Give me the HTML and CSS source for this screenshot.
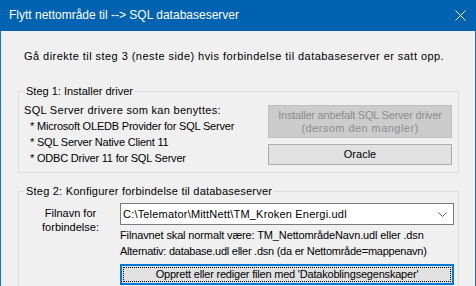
FILE: index.html
```html
<!DOCTYPE html>
<html lang="no">
<head>
  <meta charset="UTF-8">
  <title>Flytt nettområde til --&gt; SQL databaseserver</title>
  <link rel="stylesheet" href="styles.css">
</head>
<body>
  <div class="window">
    <div class="title-bar">
      <div class="title">Flytt nettområde til --&gt; SQL databaseserver</div>
      <svg class="close" width="11" height="11" viewBox="0 0 11 11">
        <path d="M0.5 0.5 L10.5 10.5 M10.5 0.5 L0.5 10.5" stroke="#fff" stroke-width="1" fill="none"/>
      </svg>
    </div>
    <div class="content">
      <div class="intro">Gå direkte til steg 3 (neste side) hvis forbindelse til databaseserver er satt opp.</div>

      <fieldset class="group group-driver">
        <legend>Steg 1: Installer driver</legend>
        <div class="driver-row">
          <div class="driver-list">
            <div class="driver-head">SQL Server drivere som kan benyttes:</div>
            <div class="bullet">* Microsoft OLEDB Provider for SQL Server</div>
            <div class="bullet">* SQL Server Native Client 11</div>
            <div class="bullet">* ODBC Driver 11 for SQL Server</div>
          </div>
          <div class="driver-buttons">
            <button class="btn btn-disabled" disabled><span class="btn-line-1">Installer anbefalt SQL Server driver</span><br><span class="btn-line-2">(dersom den mangler)</span></button>
            <button class="btn">Oracle</button>
          </div>
        </div>
      </fieldset>

      <fieldset class="group group-conn">
        <legend>Steg 2: Konfigurer forbindelse til databaseserver</legend>
        <div class="conn-row">
          <div class="conn-label">Filnavn for<br>forbindelse:</div>
          <div class="conn-field">
            <div class="combo">
              <span class="combo-text">C:\Telemator\MittNett\TM_Kroken Energi.udl</span>
              <svg class="chevron" width="9" height="5" viewBox="0 0 9 5">
                <path d="M0.5 0.5 L4.5 4.5 L8.5 0.5" stroke="#606060" stroke-width="1" fill="none"/>
              </svg>
            </div>
            <div class="hint hint-name">Filnavnet skal normalt være: TM_NettområdeNavn.udl eller .dsn</div>
            <div class="hint hint-alt">Alternativ: database.udl eller .dsn (da er Nettområde=mappenavn)</div>
            <button class="btn btn-focus"><span class="focus-rect">Opprett eller rediger filen med 'Datakoblingsegenskaper'</span></button>
          </div>
        </div>
      </fieldset>
    </div>
  </div>
</body>
</html>
```

FILE: styles.css
```css
html, body { margin: 0; padding: 0; background: #f0f0f0; overflow: hidden; }
body { font-family: 'Liberation Sans', Arial, sans-serif; font-size: 11px; color: #000; }
.window { width: 476px; height: 286px; box-sizing: border-box; border-left: 1px solid #1a6fbf; border-right: 1px solid #1a6fbf; background: #f0f0f0; }
.title-bar {
  height: 31px;
  margin: 0 -1px;
  background: #0063b1;
  display: flex;
  align-items: center;
  justify-content: space-between;
  padding: 0 10px 0 9px;
}
.title { color: #fff; font-size: 12px; padding-bottom: 1px; }
.close { display: block; }
.content { padding: 0 0 0 17px; }
.intro { line-height: 13px; margin-top: 19px; padding-left: 6px; letter-spacing: 0.45px; }

.group {
  width: 441px;
  box-sizing: border-box;
  border: 1px solid #dcdcdc;
  margin: 0;
  padding: 0 5px;
}
.group legend { padding: 0 2px; margin-left: 0; line-height: 13px; }
.group-driver { margin-top: 22px; padding-top: 4px; padding-bottom: 6px; }
.group-conn { margin-top: 12px; padding-top: 5px; padding-bottom: 10px; }
.group-conn legend { letter-spacing: 0.22px; }

.driver-row { display: flex; justify-content: space-between; }
.driver-list { line-height: 16px; }
.driver-head { letter-spacing: 0.3px; }
.bullet { padding-left: 6px; letter-spacing: -0.2px; }
.driver-buttons { display: flex; flex-direction: column; gap: 6px; padding-top: 3px; width: 184px; margin-right: 1px; }

.btn {
  font-family: inherit;
  font-size: 11px;
  color: #000;
  background: #e1e1e1;
  border: 1px solid #adadad;
  padding: 0;
  margin: 0;
  line-height: 13px;
  height: 21px;
  display: block;
  width: 100%;
}
.btn-disabled { height: 33px; background: #cccccc; border-color: #bfbfbf; color: #8d8d8d; }
.btn-line-1 { letter-spacing: -0.22px; }
.btn-line-2 { letter-spacing: 0.45px; }
.btn-focus { border: 2px solid #0078d7; padding: 1px; height: 21px; margin-top: 5px; }
.focus-rect { display: block; height: 100%; box-sizing: border-box; border: 1px dotted #000; line-height: 13px; letter-spacing: -0.2px; }

.conn-row { display: grid; grid-template-columns: 93px 1fr; column-gap: 3px; }
.conn-label { text-align: center; line-height: 14px; margin-top: 3px; }
.conn-field { margin-right: -1px; }
.combo {
  height: 22px;
  box-sizing: border-box;
  border: 1px solid #7a7a7a;
  background: #fff;
  display: flex;
  align-items: center;
  justify-content: space-between;
  padding: 0 6px 0 2px;
}
.combo-text { line-height: 13px; letter-spacing: 0.19px; }
.chevron { display: block; margin-top: 1px; }
.hint { line-height: 16px; }
.hint-name { margin-top: 2px; letter-spacing: -0.13px; }
.hint-alt { letter-spacing: -0.25px; }
```
